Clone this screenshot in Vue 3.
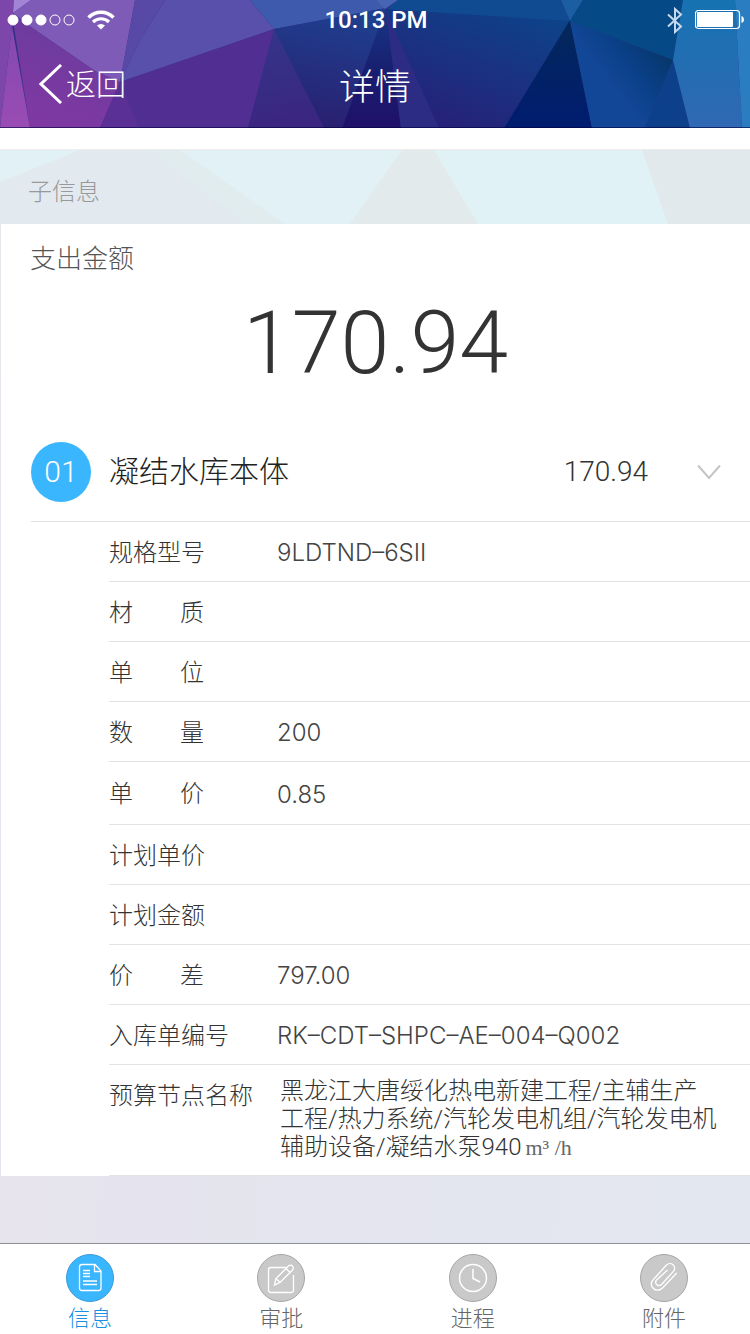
<template>
  <div class="page">
    <header class="top">
      <svg class="top-bg" viewBox="0 0 750 128" preserveAspectRatio="none" aria-hidden="true">
        <defs>
          <linearGradient id="gSpike" x1="0" y1="0" x2="0" y2="1"><stop offset="0" stop-color="#8248b0" /><stop offset="1" stop-color="#9a4cb4" /></linearGradient>
          <linearGradient id="gPlum" x1="0.6" y1="0" x2="0.2" y2="1"><stop offset="0" stop-color="#683c9e" /><stop offset="1" stop-color="#8138a2" /></linearGradient>
          <linearGradient id="gViolet" x1="0.4" y1="0" x2="0.5" y2="1"><stop offset="0" stop-color="#34358a" /><stop offset="1" stop-color="#3b2580" /></linearGradient>
          <linearGradient id="gNavy" x1="0.6" y1="0" x2="0.4" y2="1"><stop offset="0" stop-color="#1e4090" /><stop offset="1" stop-color="#2a1f70" /></linearGradient>
          <linearGradient id="gInk" x1="0.5" y1="0" x2="0.5" y2="1"><stop offset="0" stop-color="#183888" /><stop offset="0.5" stop-color="#182070" /><stop offset="1" stop-color="#20106a" /></linearGradient>
          <linearGradient id="gBlue" x1="0.8" y1="0" x2="0.2" y2="1"><stop offset="0" stop-color="#0d4389" /><stop offset="1" stop-color="#281f78" /></linearGradient>
          <linearGradient id="gDark" x1="0.5" y1="0" x2="0.5" y2="1"><stop offset="0" stop-color="#04285a" /><stop offset="1" stop-color="#001c70" /></linearGradient>
          <linearGradient id="gSea" x1="1" y1="0.3" x2="0.5" y2="0.7"><stop offset="0" stop-color="#063566" /><stop offset="0.6" stop-color="#0a4088" /><stop offset="1" stop-color="#124696" /></linearGradient>
          <linearGradient id="gSky" x1="0.5" y1="0" x2="0.5" y2="1"><stop offset="0" stop-color="#1673b2" /><stop offset="1" stop-color="#3068b4" /></linearGradient>
        </defs>
        <rect width="750" height="128" fill="#33308a" />
        <polygon points="0,0 14,0 12,26 0,128" fill="#7c46aa" />
        <polygon points="13,13 14,0 31,0" fill="#a184d6" />
        <polygon points="31,0 135,0 120,82 95,71 28,25 13,13" fill="#7f5bb8" />
        <polygon points="12,14 28,25 95,71 121,82 100,128 30,128" fill="url(#gPlum)" />
        <polygon points="12,26 30,128 0,128" fill="url(#gSpike)" />
        <polygon points="135,0 165,0 140,40 120,82" fill="#5849a6" />
        <polygon points="165,0 250,0 274,29 120,82 140,40" fill="#5850ab" />
        <polygon points="250,0 376,0 386,8 274,29" fill="#3e5aac" />
        <polygon points="120,82 274,29 248,128 100,128" fill="#512f92" />
        <polygon points="120,82 139,128 100,128" fill="#5a3096" />
        <polygon points="274,29 324,128 248,128" fill="url(#gViolet)" />
        <polygon points="274,29 386,8 342,128 324,128" fill="url(#gNavy)" />
        <polygon points="386,8 401,128 342,128" fill="url(#gInk)" />
        <polygon points="376,0 398,0 385,9" fill="#4666b4" />
        <polygon points="398,0 561,0 570,21 385,11" fill="#104b92" />
        <polygon points="385,9 570,21 504,128 438,128" fill="url(#gBlue)" />
        <polygon points="386,12 439,128 401,128" fill="#2c2c84" />
        <polygon points="570,20 592,128 504,128" fill="url(#gDark)" />
        <polygon points="561,0 583,0 570,21" fill="#1b5ea2" />
        <polygon points="583,0 683,0 673,60 570,21" fill="#054a86" />
        <polygon points="570,21 673,60 645,128 592,128" fill="url(#gSea)" />
        <polygon points="673,60 690,128 645,128" fill="#0c408a" />
        <polygon points="683,0 735,0 742,128 690,128 673,60" fill="url(#gSky)" />
        <polygon points="735,0 750,0 750,128 742,128" fill="#2a7dc0" />
        <rect y="127" width="750" height="1" fill="#000040" fill-opacity="0.6" />
      </svg>

      <div class="status">
        <div class="status-left">
          <svg width="68" height="12" viewBox="0 0 68 12" aria-hidden="true">
            <circle v-for="n in 5" :key="n" :cx="n * 14 - 8" cy="6" r="5" :fill="n < 4 ? '#fff' : 'none'" stroke="#fff" />
          </svg>
          <svg width="28" height="20" viewBox="0 0 28 20" fill="none" stroke="#fff" aria-hidden="true">
            <path d="M1.500 7.500a17.500 17.500 0 0 1 25 0" stroke-width="3.500" />
            <path d="M6 12a11.500 11.500 0 0 1 16 0" stroke-width="3.200" />
            <path d="M14 19.500l-4-4a6 6 0 0 1 8 0z" fill="#fff" stroke="none" />
          </svg>
        </div>
        <span class="clock">10:13 PM</span>
        <div class="status-right">
          <svg width="16" height="27" viewBox="0 0 16 27" fill="none" stroke="#c6d8ee" stroke-width="2" aria-hidden="true">
            <path d="M1 7.500l13 12-6 5.500V2l6 5.500-13 12" />
          </svg>
          <svg width="50" height="20" viewBox="0 0 50 20" aria-hidden="true">
            <rect x="0.500" y="0.500" width="44" height="18" rx="3" fill="none" stroke="#fff" stroke-width="1.200" />
            <rect x="2" y="2" width="36" height="15" rx="1" fill="#fff" />
            <path d="M46.500 6c3.300 1 3.300 6 0 7z" fill="#fff" />
          </svg>
        </div>
      </div>

      <nav class="nav">
        <button type="button" class="back">
          <svg width="24" height="40" viewBox="0 0 24 40" fill="none" stroke="#fff" stroke-width="3" aria-hidden="true">
            <path d="M22 1L2 20l20 19" />
          </svg>
          <span>返回</span>
        </button>
        <h1 class="title">详情</h1>
      </nav>
    </header>

    <div class="spacer"></div>

    <section class="section-head">
      <svg class="section-bg" viewBox="0 0 750 74" preserveAspectRatio="none" aria-hidden="true">
        <rect width="750" height="74" fill="#e1f1f6" />
        <polygon points="80,0 155,0 250,74 0,74 0,32" fill="#e2eaf0" />
        <polygon points="150,0 180,0 285,74 245,74" fill="#e1ecef" />
        <polygon points="402,0 434,0 478,74 350,74" fill="#e2eaec" />
        <polygon points="434,0 642,0 668,74 478,74" fill="#e0f2f6" />
        <polygon points="642,0 750,0 750,74 668,74" fill="#e1e9ec" />
      </svg>
      <h2>子信息</h2>
    </section>

    <main class="card">
      <p class="sum-label">支出金额</p>
      <p class="sum">170.94</p>

      <button type="button" class="item" :aria-expanded="abierto" @click="abierto = !abierto">
        <span class="badge">01</span>
        <span class="item-name">凝结水库本体</span>
        <span class="item-value">170.94</span>
        <svg width="24" height="16" viewBox="0 0 24 16" fill="none" stroke="#c4c4c4" stroke-width="2" aria-hidden="true">
          <path d="M1 1.500l11 12.500L23 1.500" />
        </svg>
      </button>

      <table v-if="abierto" class="detail">
        <tbody>
          <tr v-for="c in campos" :key="c.label" :class="c.clase">
            <th scope="row"><span :class="{ spread: c.label.length === 2 }">{{ c.label }}</span></th>
            <td>{{ c.valor }}<span v-if="c.unidad" class="unit">{{ c.unidad }}</span></td>
          </tr>
        </tbody>
      </table>
    </main>

    <footer class="tabs">
      <button
        v-for="t in tabs"
        :key="t.id"
        type="button"
        class="tab"
        :class="{ active: t.id === activo }"
        @click="activo = t.id"
      >
        <svg class="tab-icon" width="48" height="48" viewBox="0 0 48 48" fill="none" stroke="#fff" aria-hidden="true">
          <circle class="disc" cx="24" cy="24" r="23.500" />
          <g v-if="t.id === 'info'" stroke-width="1.300">
            <path d="M16 10.500h13l6 6.500v17a2.500 2.500 0 0 1-2.500 2.500H16a2.500 2.500 0 0 1-2.500-2.500V13a2.500 2.500 0 0 1 2.500-2.500z" />
            <path d="M28.500 10.500V17.500H35" />
            <path d="M17 16.500h7M17 19.500h7M17 22.500h7M17 27h14M17 30.500h14" />
          </g>
          <g v-else-if="t.id === 'approve'" stroke-width="1.300">
            <path d="M29 13.500H14a2.500 2.500 0 0 0-2.500 2.500v20a2.500 2.500 0 0 0 2.500 2.500h20a2.500 2.500 0 0 0 2.500-2.500V21" />
            <path d="M17.500 31l1.500-6.500L31.500 12a2.800 2.800 0 0 1 4 4L23 28.500z" />
            <path d="M19 24.500l4 4M29 14.500l4 4" />
          </g>
          <g v-else-if="t.id === 'process'" stroke-width="1.500">
            <circle cx="24" cy="24" r="13.500" />
            <path d="M24 15v9.500l7 3.500" />
          </g>
          <g v-else stroke-width="1.300">
            <path d="M36.700 19L22.500 34c-2.500 2.500-6.500 3-9 .500-2.800-2.500-3-6-.300-8.800L26 11.500c2-2.200 5-2.500 7-.700 2.200 2 2.200 4.700.200 6.800L22 30c-1.500 1.700-3.700 2-5.200.700-1.600-1.500-1.500-3.400 0-5L27.500 16" />
          </g>
        </svg>
        <span class="tab-label">{{ t.label }}</span>
      </button>
    </footer>
  </div>
</template>

<script setup>
import { ref } from 'vue'

const abierto = ref(true)
const activo = ref('info')

const campos = [
  { label: '规格型号', valor: '9LDTND–6SII' },
  { label: '材质', valor: '' },
  { label: '单位', valor: '' },
  { label: '数量', valor: '200' },
  { label: '单价', valor: '0.85', clase: 'tall' },
  { label: '计划单价', valor: '' },
  { label: '计划金额', valor: '' },
  { label: '价差', valor: '797.00' },
  { label: '入库单编号', valor: 'RK–CDT–SHPC–AE–004–Q002' },
  {
    label: '预算节点名称',
    valor: '黑龙江大唐绥化热电新建工程/主辅生产工程/热力系统/汽轮发电机组/汽轮发电机辅助设备/凝结水泵940',
    unidad: 'm³ /h',
    clase: 'long'
  }
]

const tabs = [
  { id: 'info', label: '信息' },
  { id: 'approve', label: '审批' },
  { id: 'process', label: '进程' },
  { id: 'attach', label: '附件' }
]
</script>

<style>
body { background: #e5e5ee; }
</style>

<style scoped>
.page {
  min-height: 100vh;
  display: flex;
  flex-direction: column;
  font-family: Roboto, "Noto Sans CJK SC", sans-serif;
  font-weight: 300;
  color: #333;
  background: linear-gradient(100deg, #ebe4ed 0%, #e5e4ee 35%, #e3e7f0 100%);
}
button { margin: 0; padding: 0; border: none; background: none; font: inherit; color: inherit; cursor: pointer; }
h1, h2, p { margin: 0; font-weight: 300; }
svg { display: block; flex: none; }

/* Cabecera */
.top { position: relative; color: #fff; }
.top-bg, .section-bg { position: absolute; inset: 0; width: 100%; height: 100%; }
.status { position: relative; display: grid; grid-template-columns: 1fr auto 1fr; align-items: center; height: 40px; padding: 0 5px 0 7px; }
.status-left { display: flex; align-items: center; gap: 12px; }
.status-right { display: flex; align-items: center; justify-content: flex-end; gap: 12px; }
.clock { font-size: 24px; line-height: 40px; font-weight: 500; }
.nav { position: relative; display: grid; grid-template-columns: 1fr auto 1fr; align-items: center; height: 88px; padding: 0 39px; }
.back { display: flex; align-items: center; gap: 3px; justify-self: start; font-size: 30px; line-height: 36px; }
.back span { padding-top: 2px; }
.title { padding-top: 8px; font-size: 36px; line-height: 48px; }

.spacer { height: 21px; background: #fff; border-bottom: 1px solid #efece9; }
.section-head { position: relative; padding: 26px 28px 16px; }
.section-head h2 { position: relative; font-size: 24px; line-height: 32px; color: #999; }

/* Tarjeta */
.card { margin-left: 1px; padding-top: 17px; background: #fff; }
.sum-label { padding-left: 29px; font-size: 26px; line-height: 36px; color: #555; }
.sum { margin-top: 14px; font-size: 88px; line-height: 104px; text-align: center; }
.item {
  display: flex;
  align-items: center;
  width: calc(100% - 30px);
  height: 99px;
  margin: 28px 0 0 30px;
  padding-right: 29px;
  border-bottom: 1px solid #e2e2e2;
  text-align: left;
}
.badge { width: 60px; margin-right: 18px; border-radius: 50%; background: #3ab6ff; color: #fff; font-size: 30px; line-height: 60px; text-align: center; }
.item-name { flex: 1; font-size: 30px; line-height: 40px; color: #222; }
.item-value { margin-right: 49px; font-size: 28px; line-height: 40px; }

.detail { width: calc(100% - 108px); margin-left: 108px; border-collapse: separate; border-spacing: 0; table-layout: fixed; font-size: 24px; line-height: 56px; }
.detail th, .detail td { height: 56px; padding: 3px 0 0; border-bottom: 1px solid #e2e2e2; font-weight: 300; text-align: left; vertical-align: top; }
.detail th { width: 168px; white-space: nowrap; }
.detail td { font-family: Inter, "Noto Sans CJK SC", sans-serif; color: #444; }
.tall { line-height: 59px; }
.spread { display: block; width: 95px; text-align-last: justify; }
.detail .long td { padding: 12px 33px 14px 3px; font-family: Roboto, "Noto Sans CJK SC", sans-serif; line-height: 28px; color: #333; word-break: break-all; }
.unit { margin-left: 4px; font-family: "Liberation Serif", serif; font-size: 22px; line-height: 20px; color: #666; }

/* Barra inferior */
.tabs { display: flex; justify-content: space-between; margin-top: auto; padding: 10px 62px 0 66px; background: #fff; border-top: 1px solid #8f8f96; }
.tab { display: flex; flex-direction: column; align-items: center; width: 48px; color: #666; }
.tab-label { padding-top: 1px; font-size: 22px; line-height: 31px; }
.disc { fill: #c9c9c9; stroke: #a6a6a6; }
.active { color: #1a90e0; }
.active .disc { fill: #3ab6ff; stroke: #3a9ada; }
</style>
